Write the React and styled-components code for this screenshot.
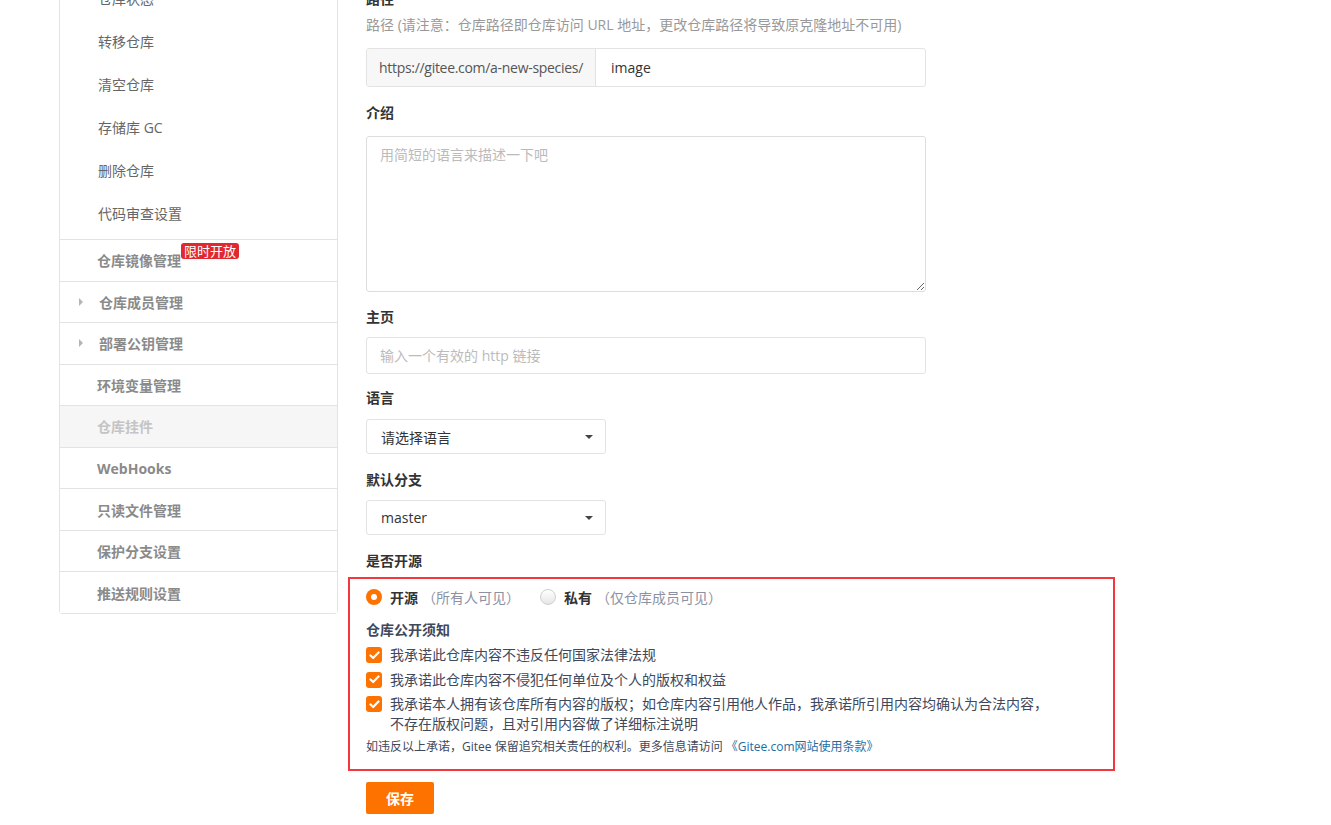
import React from "react";
import styled, { createGlobalStyle } from "styled-components";

const GlobalStyle = createGlobalStyle`
  html, body { margin: 0; padding: 0; background: #fff; }
  body {
    font-family: "Open Sans", "Noto Sans CJK SC", sans-serif;
    font-size: 14px;
    color: #333;
    overflow: hidden;
  }
  * { box-sizing: border-box; }
`;

const Page = styled.div`
  display: flex;
  align-items: flex-start;
  gap: 28px;
  padding-left: 59px;
  margin-top: -22px; /* page is scrolled */
`;

const Sidebar = styled.nav`
  width: 279px;
  flex: none;
  border: 1px solid #e3e3e3;
  border-top: none;
  border-radius: 0 0 4px 4px;
  background: #fff;
`;

const SubList = styled.div`
  display: flex;
  flex-direction: column;
  margin-top: -2px;
  padding-bottom: 5px;
`;

const SubItem = styled.div`
  height: 43px;
  display: flex;
  align-items: center;
  padding-left: 38px;
  color: #666;
  font-size: 14px;
`;

const MenuItem = styled.div`
  height: 41.56px;
  display: flex;
  align-items: center;
  border-top: 1px solid #e3e3e3;
  padding-left: ${(p) => (p.$caret ? "19px" : "37px")};
  font-weight: 700;
  font-size: 14px;
  color: ${(p) => (p.$disabled ? "#c4c4c4" : "#8a8a8a")};
  background: ${(p) => (p.$disabled ? "#f6f6f6" : "#fff")};
`;

const Caret = styled.span`
  width: 0;
  height: 0;
  border-top: 4px solid transparent;
  border-bottom: 4px solid transparent;
  border-left: 4px solid #b5b5b5;
  margin-right: 16px;
`;

const Badge = styled.span`
  align-self: flex-start;
  margin-top: 3px;
  background: #e0282e;
  color: #fff;
  font-size: 13px;
  font-weight: 400;
  line-height: 16px;
  padding: 0 3px;
  border-radius: 3px;
`;

const Main = styled.main`
  width: 560px;
  flex: none;
  padding-top: 11px;
  display: flex;
  flex-direction: column;
`;

const Field = styled.div`
  display: flex;
  flex-direction: column;
  margin-bottom: ${(p) => p.$mb || "16px"};
`;

const Label = styled.div`
  font-weight: 700;
  color: #333;
  line-height: 20px;
  margin-bottom: ${(p) => p.$mb || "10px"};
`;

const Hint = styled.div`
  color: #999;
  line-height: 20px;
  margin-top: -4px;
  margin-bottom: 13px;
`;

const InputGroup = styled.div`
  display: flex;
  height: 39px;
  border: 1px solid #e3e3e3;
  border-radius: 3px;
  overflow: hidden;
`;

const InputAddon = styled.div`
  display: flex;
  align-items: center;
  padding: 0 12px;
  background: #f7f7f7;
  border-right: 1px solid #e3e3e3;
  color: #555;
  letter-spacing: -0.3px;
`;

const InputValue = styled.div`
  display: flex;
  align-items: center;
  padding-left: 15px;
  color: #333;
`;

const TextArea = styled.textarea`
  width: 560px;
  height: 156px;
  border: 1px solid #ddd;
  border-radius: 3px;
  padding: 7px 13px;
  font-family: inherit;
  font-size: 14px;
  line-height: 22px;
  color: #333;
  resize: vertical;
  outline: none;
  &::placeholder { color: #bbb; }
`;

const TextInput = styled.input`
  width: 560px;
  height: 37px;
  border: 1px solid #e3e3e3;
  border-radius: 3px;
  padding: 0 13px;
  font-family: inherit;
  font-size: 14px;
  color: #333;
  outline: none;
  &::placeholder { color: #bbb; }
`;

const Select = styled.div`
  width: 240px;
  height: 35px;
  border: 1px solid #e3e3e3;
  border-radius: 3px;
  display: flex;
  align-items: center;
  justify-content: space-between;
  padding: 0 12px 0 14px;
  color: #333;
`;

const SelectCaret = styled.span`
  width: 0;
  height: 0;
  border-left: 4px solid transparent;
  border-right: 4px solid transparent;
  border-top: 4px solid #444;
`;

const Highlight = styled.section`
  width: 767px;
  margin-left: -18px;
  border: 2px solid #f2383c;
  padding: 8px 16px 13px;
  display: flex;
  flex-direction: column;
`;

const RadioRow = styled.div`
  display: flex;
  align-items: center;
  height: 20px;
  gap: 20px;
`;

const RadioOption = styled.label`
  display: flex;
  align-items: center;
`;

const RadioDot = styled.span`
  width: 16px;
  height: 16px;
  border-radius: 50%;
  display: flex;
  align-items: center;
  justify-content: center;
  margin-right: 8px;
  background: ${(p) => (p.$checked ? "#fe7300" : "linear-gradient(#fff, #e6e6e6)")};
  border: ${(p) => (p.$checked ? "none" : "1px solid #d0d0d0")};
  &::after {
    content: "";
    width: 6px;
    height: 6px;
    border-radius: 50%;
    background: #fff;
    display: ${(p) => (p.$checked ? "block" : "none")};
  }
`;

const OptionLabel = styled.span`
  font-weight: 700;
  color: #333;
`;

const OptionNote = styled.span`
  color: #8c92a4;
  margin-left: 4px;
`;

const NoticeTitle = styled.div`
  margin-top: 13px;
  font-weight: 700;
  color: #40485b;
  line-height: 20px;
`;

const CheckList = styled.div`
  margin-top: 5px;
  display: flex;
  flex-direction: column;
  gap: 4.5px;
`;

const CheckRow = styled.label`
  display: flex;
  align-items: flex-start;
  color: #40485b;
  line-height: 20px;
`;

const CheckBox = styled.span`
  width: 16px;
  height: 16px;
  flex: none;
  margin-top: 2px;
  margin-right: 8px;
  border-radius: 3px;
  background: #fe7300;
  display: flex;
  align-items: center;
  justify-content: center;
`;

const Footnote = styled.div`
  margin-top: 4px;
  font-size: 12px;
  line-height: 18px;
  color: #40485b;
`;

const Link = styled.a`
  color: #1a6fa6;
  text-decoration: none;
`;

const SaveButton = styled.button`
  margin-top: 11px;
  width: 68px;
  height: 32px;
  border: none;
  border-radius: 2px;
  background: #fe7300;
  color: #fff;
  font-family: inherit;
  font-size: 14px;
  font-weight: 700;
`;

const Check = () => (
  <svg width="11" height="9" viewBox="0 0 11 9">
    <polyline points="1.5,4.5 4.2,7 9.5,1.5" fill="none" stroke="#fff" strokeWidth="2.2" strokeLinecap="round" strokeLinejoin="round" />
  </svg>
);

const subItems = ["仓库状态", "转移仓库", "清空仓库", "存储库 GC", "删除仓库", "代码审查设置"];

export default function App() {
  return (
    <>
      <GlobalStyle />
      <Page>
        <Sidebar>
          <SubList>
            {subItems.map((t) => (
              <SubItem key={t}>{t}</SubItem>
            ))}
          </SubList>
          <MenuItem>
            仓库镜像管理<Badge>限时开放</Badge>
          </MenuItem>
          <MenuItem $caret>
            <Caret />
            仓库成员管理
          </MenuItem>
          <MenuItem $caret>
            <Caret />
            部署公钥管理
          </MenuItem>
          <MenuItem>环境变量管理</MenuItem>
          <MenuItem $disabled>仓库挂件</MenuItem>
          <MenuItem>WebHooks</MenuItem>
          <MenuItem>只读文件管理</MenuItem>
          <MenuItem>保护分支设置</MenuItem>
          <MenuItem>推送规则设置</MenuItem>
        </Sidebar>

        <Main>
          <Field>
            <Label $mb="10px">路径</Label>
            <Hint>路径 (请注意：仓库路径即仓库访问 URL 地址，更改仓库路径将导致原克隆地址不可用)</Hint>
            <InputGroup>
              <InputAddon>https://gitee.com/a-new-species/</InputAddon>
              <InputValue>image</InputValue>
            </InputGroup>
          </Field>

          <Field $mb="15px">
            <Label $mb="13px">介绍</Label>
            <TextArea placeholder="用简短的语言来描述一下吧" />
          </Field>

          <Field $mb="14px">
            <Label>主页</Label>
            <TextInput placeholder="输入一个有效的 http 链接" />
          </Field>

          <Field $mb="16px">
            <Label $mb="11px">语言</Label>
            <Select>
              请选择语言
              <SelectCaret />
            </Select>
          </Field>

          <Field $mb="16px">
            <Label>默认分支</Label>
            <Select>
              master
              <SelectCaret />
            </Select>
          </Field>

          <Field $mb="6px">
            <Label $mb="0">是否开源</Label>
          </Field>

          <Highlight>
            <RadioRow>
              <RadioOption>
                <RadioDot $checked />
                <OptionLabel>开源</OptionLabel>
                <OptionNote>（所有人可见）</OptionNote>
              </RadioOption>
              <RadioOption>
                <RadioDot />
                <OptionLabel>私有</OptionLabel>
                <OptionNote>（仅仓库成员可见）</OptionNote>
              </RadioOption>
            </RadioRow>
            <NoticeTitle>仓库公开须知</NoticeTitle>
            <CheckList>
              <CheckRow>
                <CheckBox><Check /></CheckBox>
                <span>我承诺此仓库内容不违反任何国家法律法规</span>
              </CheckRow>
              <CheckRow>
                <CheckBox><Check /></CheckBox>
                <span>我承诺此仓库内容不侵犯任何单位及个人的版权和权益</span>
              </CheckRow>
              <CheckRow>
                <CheckBox><Check /></CheckBox>
                <span>
                  我承诺本人拥有该仓库所有内容的版权；如仓库内容引用他人作品，我承诺所引用内容均确认为合法内容，
                  <br />
                  不存在版权问题，且对引用内容做了详细标注说明
                </span>
              </CheckRow>
            </CheckList>
            <Footnote>
              如违反以上承诺，Gitee 保留追究相关责任的权利。更多信息请访问 <Link href="#">《Gitee.com网站使用条款》</Link>
            </Footnote>
          </Highlight>

          <div>
            <SaveButton>保存</SaveButton>
          </div>
        </Main>
      </Page>
    </>
  );
}
